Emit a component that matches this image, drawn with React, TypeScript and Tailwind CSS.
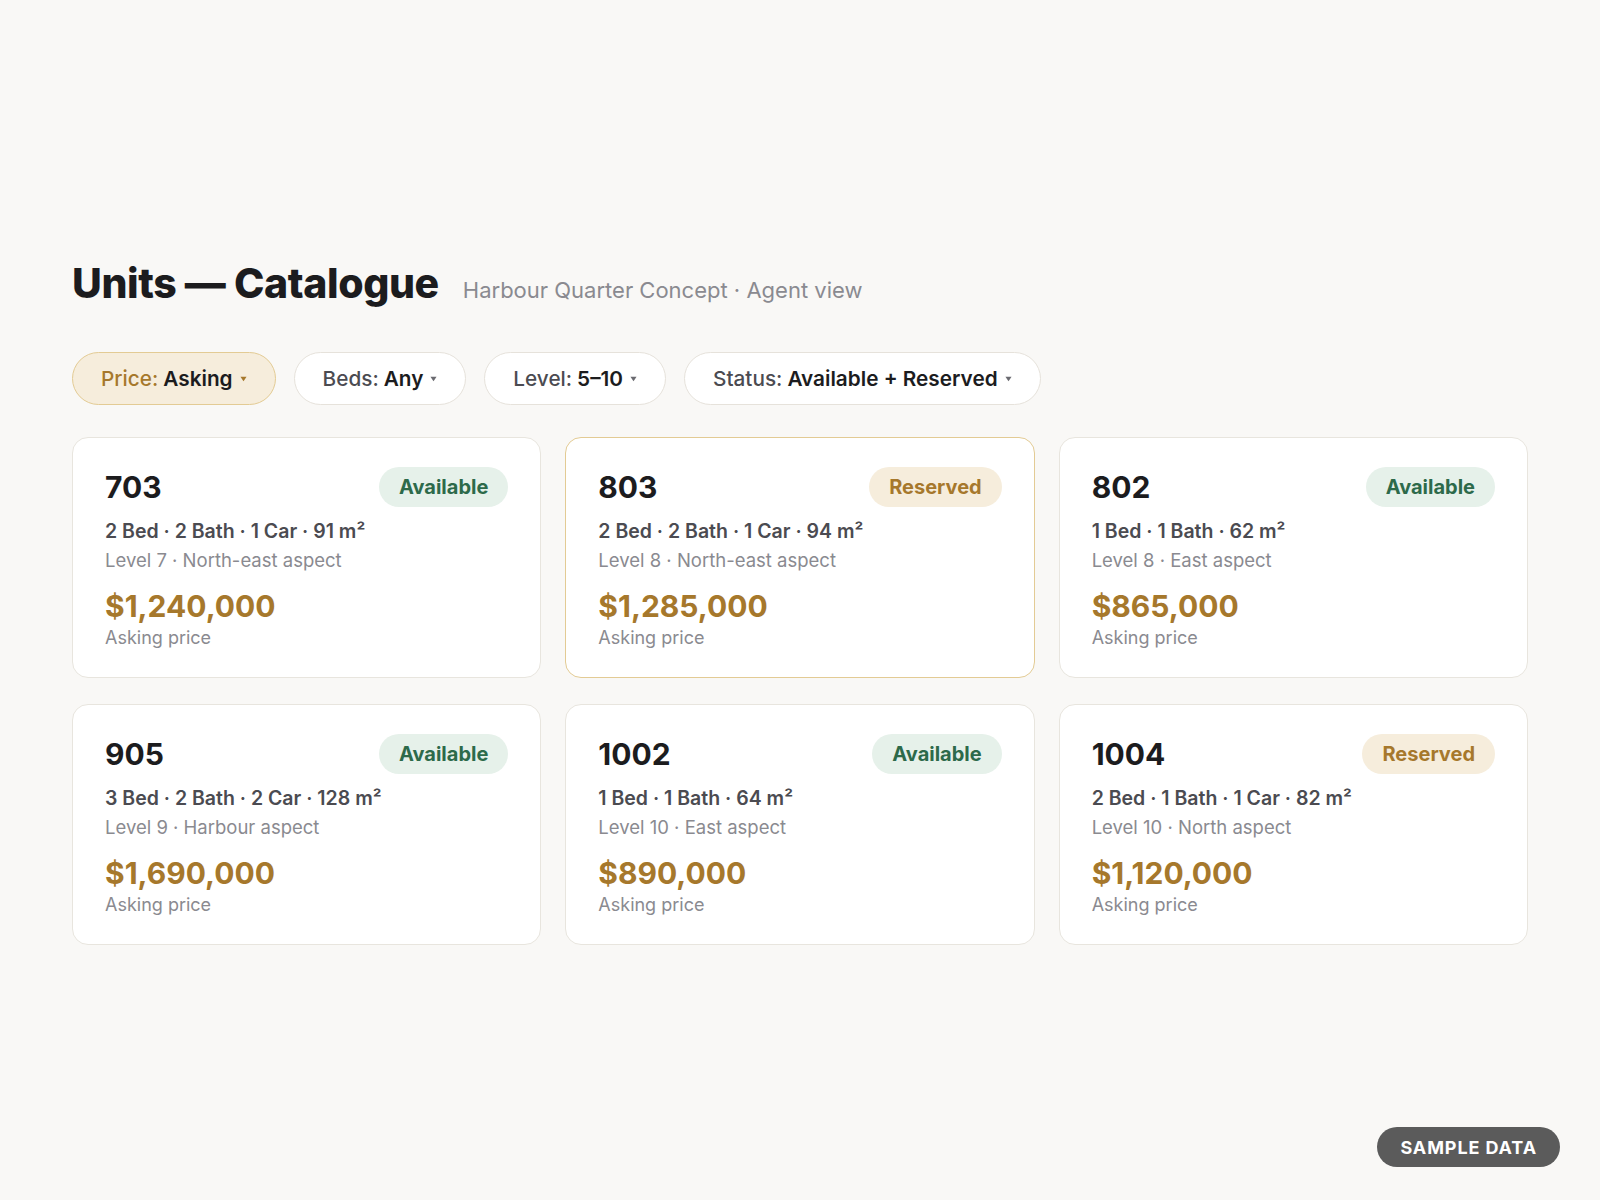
import React from "react";

type Unit = {
  num: string;
  status: "Available" | "Reserved";
  specs: string;
  location: string;
  price: string;
  highlight?: boolean;
};

const units: Unit[] = [
  { num: "703", status: "Available", specs: "2 Bed · 2 Bath · 1 Car · 91 m²", location: "Level 7 · North-east aspect", price: "$1,240,000" },
  { num: "803", status: "Reserved", specs: "2 Bed · 2 Bath · 1 Car · 94 m²", location: "Level 8 · North-east aspect", price: "$1,285,000", highlight: true },
  { num: "802", status: "Available", specs: "1 Bed · 1 Bath · 62 m²", location: "Level 8 · East aspect", price: "$865,000" },
  { num: "905", status: "Available", specs: "3 Bed · 2 Bath · 2 Car · 128 m²", location: "Level 9 · Harbour aspect", price: "$1,690,000" },
  { num: "1002", status: "Available", specs: "1 Bed · 1 Bath · 64 m²", location: "Level 10 · East aspect", price: "$890,000" },
  { num: "1004", status: "Reserved", specs: "2 Bed · 1 Bath · 1 Car · 82 m²", location: "Level 10 · North aspect", price: "$1,120,000" },
];

const filters = [
  { label: "Price:", value: "Asking", active: true },
  { label: "Beds:", value: "Any" },
  { label: "Level:", value: "5–10" },
  { label: "Status:", value: "Available + Reserved" },
];

function Caret({ className }: { className: string }) {
  return (
    <svg viewBox="0 0 8 6" className={className} fill="currentColor">
      <path d="M0.5 0.5h7L4 5.5z" />
    </svg>
  );
}

function FilterPill({ label, value, active }: { label: string; value: string; active?: boolean }) {
  return (
    <button
      className={
        active
          ? "h-[53px] px-7 rounded-full border-[1.5px] border-[#e3cb94] bg-[#f6eddc] flex items-center text-[20.75px]"
          : "h-[53px] px-7 rounded-full border-[1.5px] border-[#e6e2db] bg-white flex items-center text-[20.75px]"
      }
    >
      <span className={active ? "font-medium text-[#a6782c]" : "font-medium text-[#4b4b51]"}>{label}</span>
      <span className="ml-[5px] font-semibold text-[#1c1c1e]">{value}</span>
      <Caret className={active ? "ml-[7px] w-[7px] h-[6px] text-[#a6782c]" : "ml-[7px] w-[7px] h-[6px] text-[#6a6a70]"} />
    </button>
  );
}

function UnitCard({ unit }: { unit: Unit }) {
  return (
    <div
      className={
        unit.highlight
          ? "bg-white rounded-2xl border-[1.5px] border-[#e3cb94] px-8 pt-[29px] pb-[26px]"
          : "bg-white rounded-2xl border-[1.5px] border-[#e8e5de] px-8 pt-[29px] pb-[26px]"
      }
    >
      {/* number + status */}
      <div className="flex items-center justify-between h-10">
        <span className="text-[30px] font-bold text-[#1c1c1e] leading-none">{unit.num}</span>
        <span
          className={
            unit.status === "Available"
              ? "h-10 px-5 rounded-full bg-[#e6f1ea] text-[#2d6a4a] text-[20px] font-bold flex items-center"
              : "h-10 px-5 rounded-full bg-[#f6eddc] text-[#a6782c] text-[20px] font-bold flex items-center"
          }
        >
          {unit.status}
        </span>
      </div>
      <div className="mt-2.5 text-[19.5px] leading-[29px] font-semibold text-[#4b4b51]">{unit.specs}</div>
      <div className="text-[18.5px] leading-[29px] text-[#8a8a90]">{unit.location}</div>
      <div className="mt-[13px] text-[30px] leading-[36px] font-bold text-[#a6782c]">{unit.price}</div>
      <div className="text-[18px] leading-[27px] text-[#8a8a90]">Asking price</div>
    </div>
  );
}

export default function App() {
  return (
    <div className="min-h-screen bg-[#f9f8f6] font-['Inter',sans-serif] px-[72px] pt-[259px]">
      {/* Header */}
      <div className="flex items-baseline gap-6 h-12">
        <h1 className="text-[41px] leading-[48px] font-extrabold tracking-[-0.01em] text-[#1c1c1e]">Units — Catalogue</h1>
        <span className="text-[22px] text-[#8a8a90]">Harbour Quarter Concept · Agent view</span>
      </div>

      {/* Filters */}
      <div className="flex gap-4.5 mt-[45px]">
        {filters.map((f) => (
          <FilterPill key={f.label} label={f.label} value={f.value} active={f.active} />
        ))}
      </div>

      {/* Units grid */}
      <div className="grid grid-cols-3 gap-x-6 gap-y-[26px] mt-8">
        {units.map((u) => (
          <UnitCard key={u.num} unit={u} />
        ))}
      </div>

      <div className="fixed bottom-[33px] right-[40px] h-10 px-[23px] rounded-full bg-[#5b5b5b] text-white text-[18px] font-bold tracking-wider flex items-center">
        SAMPLE DATA
      </div>
    </div>
  );
}
